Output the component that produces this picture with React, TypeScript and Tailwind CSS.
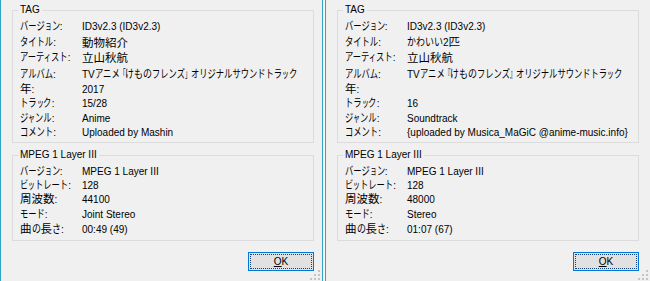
import React from "react";

type Row = { label: string; value: string; mt: string };

type Info = {
  tag: Row[];
  mpeg: Row[];
};

const left: Info = {
  tag: [
    { label: "バージョン:", value: "ID3v2.3 (ID3v2.3)", mt: "mt-[2px]" },
    { label: "タイトル:", value: "動物紹介", mt: "mt-[2px]" },
    { label: "アーティスト:", value: "立山秋航", mt: "mt-[1px]" },
    { label: "アルバム:", value: "TVアニメ「けものフレンズ」オリジナルサウンドトラック", mt: "mt-[3px]" },
    { label: "年:", value: "2017", mt: "mt-[1px]" },
    { label: "トラック:", value: "15/28", mt: "mt-0" },
    { label: "ジャンル:", value: "Anime", mt: "mt-[1px]" },
    { label: "コメント:", value: "Uploaded by Mashin", mt: "mt-0" },
  ],
  mpeg: [
    { label: "バージョン:", value: "MPEG 1 Layer III", mt: "mt-[2px]" },
    { label: "ビットレート:", value: "128", mt: "mt-0" },
    { label: "周波数:", value: "44100", mt: "mt-0" },
    { label: "モード:", value: "Joint Stereo", mt: "mt-[1px]" },
    { label: "曲の長さ:", value: "00:49 (49)", mt: "mt-[1px]" },
  ],
};

const right: Info = {
  tag: [
    { label: "バージョン:", value: "ID3v2.3 (ID3v2.3)", mt: "mt-[2px]" },
    { label: "タイトル:", value: "かわいい2匹", mt: "mt-[2px]" },
    { label: "アーティスト:", value: "立山秋航", mt: "mt-[1px]" },
    { label: "アルバム:", value: "TVアニメ『けものフレンズ』オリジナルサウンドトラック", mt: "mt-[3px]" },
    { label: "年:", value: "", mt: "mt-[1px]" },
    { label: "トラック:", value: "16", mt: "mt-0" },
    { label: "ジャンル:", value: "Soundtrack", mt: "mt-[1px]" },
    { label: "コメント:", value: "{uploaded by Musica_MaGiC @anime-music.info}", mt: "mt-0" },
  ],
  mpeg: [
    { label: "バージョン:", value: "MPEG 1 Layer III", mt: "mt-[2px]" },
    { label: "ビットレート:", value: "128", mt: "mt-0" },
    { label: "周波数:", value: "48000", mt: "mt-0" },
    { label: "モード:", value: "Stereo", mt: "mt-[1px]" },
    { label: "曲の長さ:", value: "01:07 (67)", mt: "mt-[1px]" },
  ],
};

const EM = 11.5;
const JP = "font-['Noto_Sans_CJK_JP',sans-serif] text-[11.5px] whitespace-pre";

function kindOf(c: string) {
  if (/[\x00-\x7F]/.test(c)) return "latin";
  if ("「『".includes(c)) return "open";
  if ("」』".includes(c)) return "close";
  if ("ァィゥェォッャュョヮ".includes(c)) return "small";
  if (/[\u30A0-\u30FF]/.test(c)) return "kata";
  if (/[\u3040-\u309F]/.test(c)) return "hira";
  return "kanji";
}

function runs(s: string) {
  const out: { kind: string; text: string }[] = [];
  for (const c of s) {
    const kind = kindOf(c);
    const last = out[out.length - 1];
    if (last && last.kind === kind) last.text += c;
    else out.push({ kind, text: c });
  }
  return out;
}

const squeeze: Record<string, { k: number; cls: string }> = {
  kata: { k: 0.72, cls: "origin-left scale-x-[0.72]" },
  small: { k: 0.6, cls: "origin-left scale-x-[0.6]" },
  hira: { k: 0.78, cls: "origin-left scale-x-[0.78]" },
  close: { k: 0.5, cls: "origin-left scale-x-[0.5]" },
  open: { k: 0.5, cls: "origin-right scale-x-[0.5]" },
};

// the dialog's UI font has narrow kana; squeeze the full-width kana and pull the
// neighbouring text in by the width the squeeze frees (1em per glyph)
function Txt({ s }: { s: string }) {
  return (
    <>
      {runs(s).map((r, i) => {
        if (r.kind === "latin")
          return (
            <span key={i} className="font-['Liberation_Sans',sans-serif] text-[10px] whitespace-pre">
              {r.text}
            </span>
          );
        if (r.kind === "kanji")
          return (
            <span key={i} className={JP}>
              {r.text}
            </span>
          );
        const q = squeeze[r.kind];
        const freed = -r.text.length * EM * (1 - q.k);
        return (
          <span
            key={i}
            className={`${JP} inline-block ${q.cls}`}
            style={r.kind === "open" ? { marginLeft: freed } : { marginRight: freed }}
          >
            {r.text}
          </span>
        );
      })}
    </>
  );
}

function Group({ title, rows, className }: { title: string; rows: Row[]; className: string }) {
  return (
    <fieldset className={`w-[302px] border border-[#dcdcdc] ${className}`}>
      <legend className="ml-[5px] px-[2px] leading-[12px] font-['Liberation_Sans',sans-serif] text-[10px] text-black">
        {title}
      </legend>
      {rows.map((r, i) => (
        <div key={i} className={`flex items-center h-[14px] leading-[14px] pl-[7px] text-black ${r.mt}`}>
          <div className="w-[62px] shrink-0 whitespace-nowrap">
            <Txt s={r.label} />
          </div>
          <div className="whitespace-nowrap">
            <Txt s={r.value} />
          </div>
        </div>
      ))}
    </fieldset>
  );
}

function Grip() {
  const dots = [
    [8, 0],
    [4, 4],
    [8, 4],
    [0, 8],
    [4, 8],
    [8, 8],
  ];
  return (
    <svg width="10" height="10" viewBox="0 0 10 10" className="absolute right-[2px] bottom-[1px]">
      {dots.map(([x, y], i) => (
        <rect key={i} x={x} y={y} width="2" height="2" fill="#c4c4c4" />
      ))}
    </svg>
  );
}

function Window({ info, className }: { info: Info; className: string }) {
  return (
    <div className={`relative h-[281px] bg-[#f0f0f0] border-[#30a6c6] pl-[11px] pt-[4px] ${className}`}>
      <Group title="TAG" rows={info.tag} className="pb-[4px]" />
      <Group title="MPEG 1 Layer III" rows={info.mpeg} className="mt-[6px] pb-[5px]" />
      <div className="w-[302px] flex justify-end mt-[11px]">
        <button className="relative w-[66px] h-[19px] bg-[#e1e1e1] border border-[#0078d7] font-['Liberation_Sans',sans-serif] text-[10px] text-black leading-[17px]">
          <span className="absolute inset-[1px] border border-dotted border-[#1c3f7a]" />
          <span className="relative">
            <span className="underline">O</span>K
          </span>
        </button>
      </div>
      <Grip />
    </div>
  );
}

export default function App() {
  return (
    <div className="flex w-[650px] h-[281px] overflow-hidden bg-[#f7f7f7]">
      <Window info={left} className="w-[323px] shrink-0 border-l border-r" />
      <div className="w-[2px] shrink-0" />
      <Window info={right} className="w-[325px] shrink-0 border-l" />
    </div>
  );
}
